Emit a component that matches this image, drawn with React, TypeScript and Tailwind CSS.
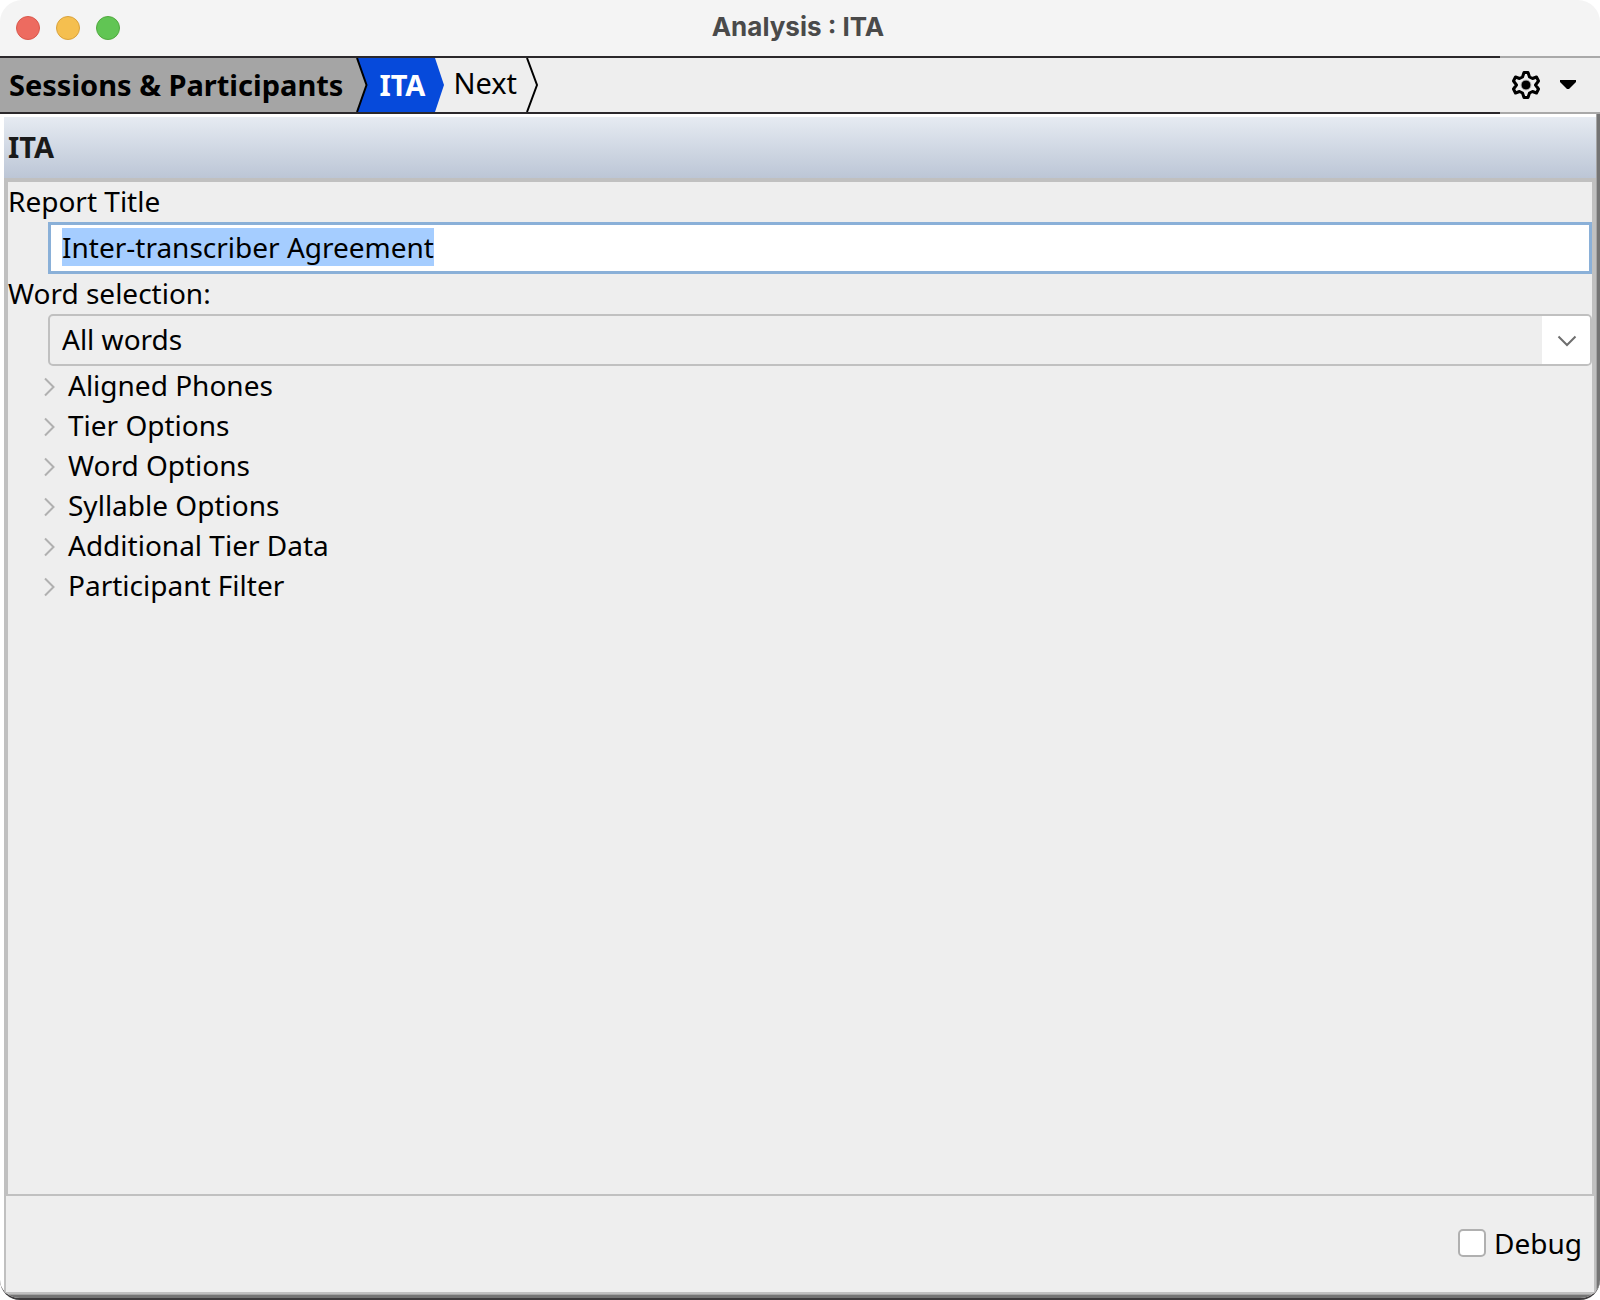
import { useEffect, useRef, useState } from "react";

const sections = [
  "Aligned Phones",
  "Tier Options",
  "Word Options",
  "Syllable Options",
  "Additional Tier Data",
  "Participant Filter",
];

export default function App() {
  const [title, setTitle] = useState("Inter-transcriber Agreement");
  const [debug, setDebug] = useState(false);
  const titleRef = useRef<HTMLInputElement>(null);

  useEffect(() => {
    titleRef.current?.focus();
    titleRef.current?.select();
  }, []);

  return (
    <div className="bg-white">
      <div className="flex min-h-screen flex-col overflow-hidden rounded-t-[22px] rounded-b-[20px] border-b-2 border-[#3d3b3d] bg-white font-['Noto_Sans',sans-serif] text-[28px] leading-10 text-black">
        <TitleBar />
        <Toolbar />
        <div className="flex flex-1 flex-col border-r-3 border-b-3 border-[#747474]">
          <div className="flex flex-1 flex-col border-r border-b border-[#a5a5a5] pt-[3px] pl-1">
            <main className="flex flex-1 flex-col">
              <h2 className="bg-linear-to-b from-[#e6ebf2] to-[#bcc6d6] pt-2.5 pb-[11px] pl-1 text-[29px] leading-10 font-bold text-[#1a1a1a]">
                ITA
              </h2>
              <form className="flex-1 border-4 border-b-2 border-[#c0c0c0] bg-[#eeeeee]">
                <label htmlFor="report-title" className="block pb-0.5 leading-[38px]">
                  Report Title
                </label>
                <div className="flex pl-10">
                  <input
                    id="report-title"
                    ref={titleRef}
                    value={title}
                    onChange={(e) => setTitle(e.target.value)}
                    className="h-[52px] min-w-0 flex-1 border-3 border-[#8ab0d8] bg-white px-[11px] pb-0.5 outline-none selection:bg-[#a5cdff] selection:text-black"
                  />
                </div>
                <label htmlFor="word-selection" className="block pb-0.5 leading-[38px]">
                  Word selection:
                </label>
                <div className="grid pl-10">
                  <select
                    id="word-selection"
                    className="col-start-1 row-start-1 h-[52px] w-full appearance-none rounded-[5px] border-2 border-[#c0c0c0] bg-[#eeeeee] px-3 pb-0.5 outline-none"
                  >
                    <option>All words</option>
                  </select>
                  <span className="pointer-events-none col-start-1 row-start-1 m-0.5 flex w-12 items-center justify-center justify-self-end rounded-r-[3px] bg-white pt-0.5 pl-0.5">
                    <svg width="20" height="12" viewBox="0 0 20 12" fill="none" aria-hidden="true">
                      <path d="M1.5 1.500 10 10l8.500-8.500" stroke="#6e6e6e" strokeWidth="2" />
                    </svg>
                  </span>
                </div>
                {sections.map((name) => (
                  <Section key={name} name={name} />
                ))}
              </form>
            </main>
            <footer className="flex h-[98px] items-center justify-end border-2 border-t-0 border-[#c0c0c0] bg-[#eeeeee] pr-3 pb-0.5">
              <label className="flex items-center gap-2">
                <input
                  type="checkbox"
                  checked={debug}
                  onChange={(e) => setDebug(e.target.checked)}
                  className="size-7 appearance-none rounded-[5px] border-2 border-[#b0b0b0] bg-white checked:bg-[#4b8fdc]"
                />
                Debug
              </label>
            </footer>
          </div>
        </div>
      </div>
    </div>
  );
}

function TitleBar() {
  return (
    <header className="grid h-14 grid-cols-[1fr_auto_1fr] items-center bg-[#f4f4f4] px-4">
      <div className="flex gap-4">
        <button aria-label="Close" className="size-6 rounded-full border border-[#d9584c] bg-[#ed6b60]" />
        <button aria-label="Minimize" className="size-6 rounded-full border border-[#d9a23c] bg-[#f5bf4f]" />
        <button aria-label="Zoom" className="size-6 rounded-full border border-[#51a93f] bg-[#61c554]" />
      </div>
      <h1 className="pr-1 pb-0.5 font-['Inter',sans-serif] text-[26px] font-bold text-[#4a4a4a]">
        Analysis : ITA
      </h1>
    </header>
  );
}

function Toolbar() {
  return (
    <div className="flex h-[58px] bg-[#eeeeee]">
      <nav aria-label="Steps" className="flex flex-1 border-y-2 border-[#2b282b] text-[29px]">
        <button className="bg-[#a5a5a5] pr-3 pl-[9px] font-bold">
          Sessions &amp; Participants
        </button>
        <div className="flex bg-[#064adb]">
          <svg width="14" height="54" viewBox="0 0 14 54" aria-hidden="true">
            <path d="M0 0h2l9.500 27L2 54H0Z" fill="#a5a5a5" />
            <path d="M2 0l9.500 27L2 54" fill="none" stroke="#000" strokeWidth="2" />
          </svg>
          <button className="px-2.5 font-bold text-white">ITA</button>
        </div>
        <svg width="10" height="54" viewBox="0 0 10 54" aria-hidden="true">
          <path d="M0 0l9 27L0 54Z" fill="#064adb" />
        </svg>
        <button className="px-2 pb-1">Next</button>
        <svg width="14" height="54" viewBox="0 0 14 54" fill="none" aria-hidden="true">
          <path d="M2 0l10 27L2 54" stroke="#000" strokeWidth="2" />
        </svg>
      </nav>
      <button
        aria-label="Settings"
        className="flex w-25 items-center gap-5 border-y-2 border-[#a9a9a9] pl-3"
      >
        <svg width="28" height="28" viewBox="0 0 28 28" aria-hidden="true">
          <path
            d="M12 1.500h4l1.500 4.500 3 1.500 4-1.500 2 4-3 4 3 4-2 4-4-1.500-3 1.500-1.500 4.500h-4L10.500 22l-3-1.500-4 1.500-2-4 3-4-3-4 2-4 4 1.500 3-1.500Z"
            fill="none"
            stroke="#000"
            strokeWidth="3"
            strokeLinejoin="round"
          />
          <circle cx="14" cy="14" r="5" fill="#000" stroke="#bdbdbd" strokeWidth="1" />
        </svg>
        <svg width="16" height="10" viewBox="0 0 16 10" aria-hidden="true">
          <path d="M0 0h16v2L9 9H7L0 2Z" />
        </svg>
      </button>
    </div>
  );
}

function Section({ name }: { name: string }) {
  return (
    <button type="button" aria-expanded="false" className="flex gap-3 pb-0.5 pl-9 leading-[38px]">
      <svg width="12" height="20" viewBox="0 0 12 20" fill="none" aria-hidden="true" className="mt-[11px]">
        <path d="M1 1.500 9.500 10 1 18.500" stroke="#b0b0b0" strokeWidth="2" />
      </svg>
      {name}
    </button>
  );
}
